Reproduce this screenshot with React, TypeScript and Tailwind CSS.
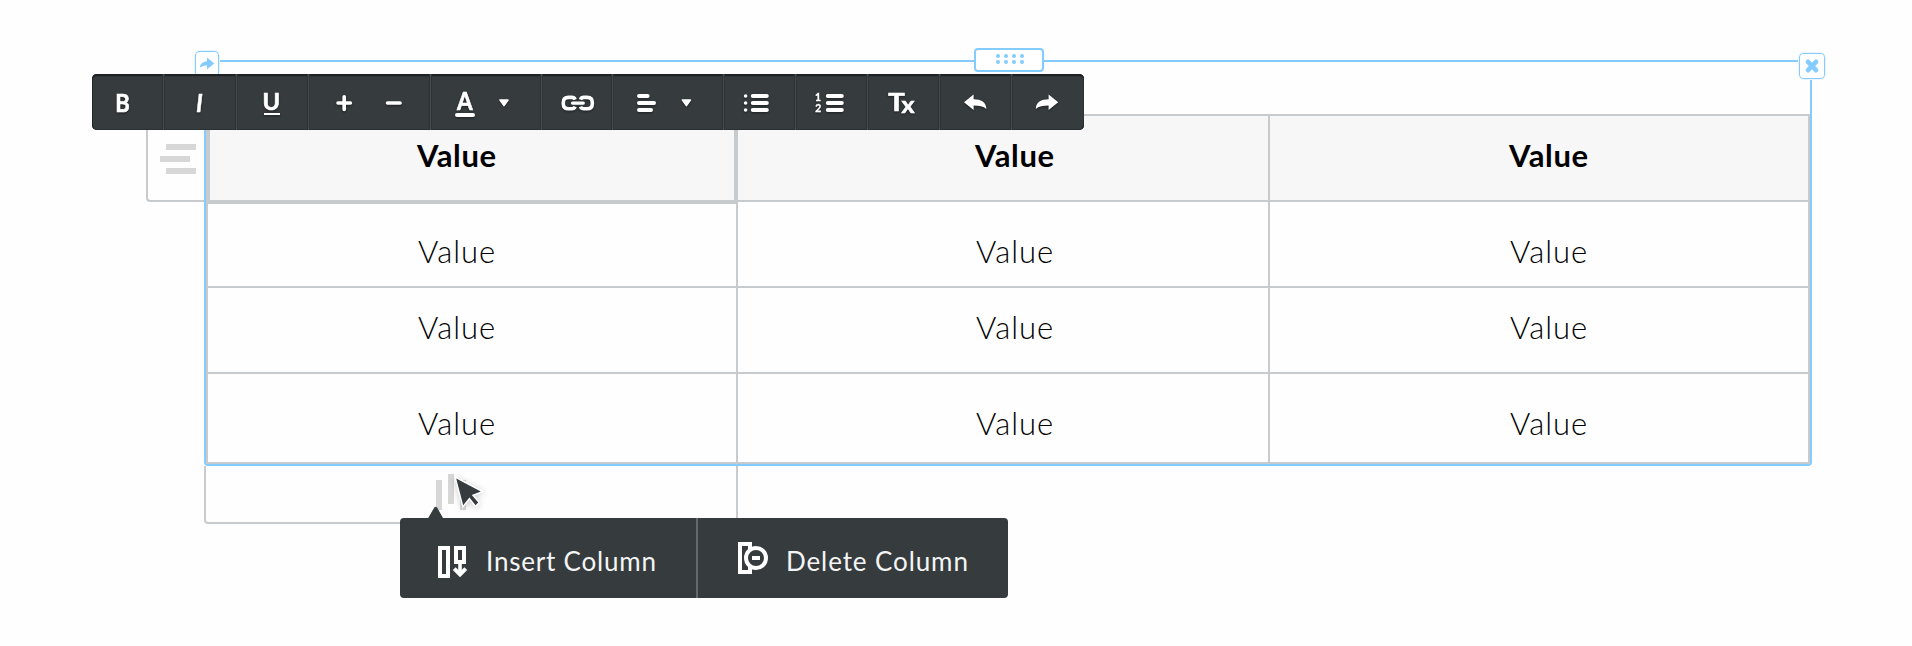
import type { ReactNode } from 'react';

const bodyRows = [
  { height: 'h-[86px]', text: 'pt-[31px]' },
  { height: 'h-[86px]', text: 'pt-[21px]' },
  { height: 'h-[88px]', text: 'pt-[31px]' },
];

const columns = ['w-[530px] pl-[210px] border-r-2', 'w-[532px] pl-[238px] border-r-2', 'w-[538px] pl-[240px]'];
const headColumns = ['w-[530px] pl-[209px] border-r-2', 'w-[532px] pl-[237px] border-r-2', 'w-[538px] pl-[239px]'];

const line = { stroke: '#fff', strokeWidth: 4, strokeLinecap: 'round' as const, fill: 'none' };

function Tool({ x, w, label, first, children }: { x: number; w: number; label: string; first?: boolean; children: ReactNode }) {
  return (
    <button
      aria-label={label}
      className={
        'h-full shrink-0 ' +
        (first
          ? 'shadow-[inset_-1px_0_0_#2c3134]'
          : 'shadow-[inset_1px_0_0_#454b4e,inset_2px_0_0_#2f3437,inset_-1px_0_0_#2c3134]')
      }
      style={{ width: w }}
    >
      <svg
        className="block overflow-visible drop-shadow-[0_1px_1px_rgba(0,0,0,0.45)]"
        width={w}
        height={56}
        viewBox={`${x} 74 ${w} 56`}
        fill="#fff"
        fontFamily="Lato, sans-serif"
        fontWeight={700}
      >
        {children}
      </svg>
    </button>
  );
}

const Caret = ({ x }: { x: number }) => (
  <path d={`M${x} 100h8l-4 5.6z`} stroke="#fff" strokeWidth="1.6" strokeLinejoin="round" />
);

const Rows = ({ x }: { x: number }) => <path {...line} d={`M${x} 96h14M${x} 103h14M${x} 110h14`} />;

function Toolbar() {
  return (
    <div className="absolute left-[92px] top-[74px] flex h-14 w-[992px] overflow-hidden rounded-[5px] bg-[#363b3e] shadow-[inset_0_2px_1px_#1d2122,inset_0_-1px_0_#2a2f32,inset_1px_0_0_#222627,inset_-1px_0_0_#1d2122]">
      <Tool x={92} w={71} label="Bold" first>
        <text x="115.3" y="111.6" fontSize="24" textLength="14.5" lengthAdjust="spacingAndGlyphs" stroke="#fff" strokeWidth=".6">B</text>
      </Tool>
      <Tool x={163} w={73} label="Italic">
        <text x="196" y="111.6" fontSize="24" fontStyle="italic" stroke="#fff" strokeWidth=".4">I</text>
      </Tool>
      <Tool x={236} w={72} label="Underline">
        <text x="262.6" y="109.6" fontSize="22" textLength="17.6" lengthAdjust="spacingAndGlyphs" stroke="#fff" strokeWidth=".6">U</text>
        <rect x="264" y="113" width="16" height="2" />
      </Tool>
      <Tool x={308} w={122} label="Font size">
        <path {...line} strokeWidth={3.6} d="M338 103h12.4M344.2 96.8v12.6M387.5 103h12.6" />
      </Tool>
      <Tool x={430} w={111} label="Text color">
        <text x="457" y="109.8" fontSize="24" textLength="15.6" lengthAdjust="spacingAndGlyphs" stroke="#fff" strokeWidth=".7">A</text>
        <path {...line} d="M457 115h16" />
        <Caret x={500} />
      </Tool>
      <Tool x={541} w={71} label="Link">
        <path
          {...line}
          strokeWidth={3.6}
          strokeLinecap="butt"
          d="M575.1 99.6q-.9-2.2-3.4-2.2h-3.2q-5.2 0-5.2 5v1.4q0 5 5.2 5h3.2q2.5 0 3.4-2.2M580.5 99.6q.9-2.2 3.4-2.2h3.2q5.2 0 5.2 5v1.4q0 5-5.2 5h-3.2q-2.5 0-3.4-2.2"
        />
        <path d="M570 103.1h15.6" stroke="#363b3e" strokeWidth="5.4" />
        <path {...line} strokeWidth={3.4} d="M572.6 103.1h10.6" />
      </Tool>
      <Tool x={612} w={111} label="Align">
        <path {...line} d="M639 96h8.6M639 103h15M639 110h12" />
        <Caret x={682.4} />
      </Tool>
      <Tool x={723} w={72} label="Bulleted list">
        <circle cx="745.6" cy="96" r="1.8" />
        <circle cx="745.6" cy="103" r="1.8" />
        <circle cx="745.6" cy="110" r="1.8" />
        <Rows x={752.8} />
      </Tool>
      <Tool x={795} w={72} label="Numbered list">
        <text x="815" y="100.8" fontSize="11.5" textLength="6" lengthAdjust="spacingAndGlyphs" stroke="#fff" strokeWidth=".4">1</text>
        <text x="815.3" y="111.8" fontSize="12" textLength="6" lengthAdjust="spacingAndGlyphs" stroke="#fff" strokeWidth=".4">2</text>
        <Rows x={827.8} />
      </Tool>
      <Tool x={867} w={72} label="Clear formatting">
        <text x="888.3" y="111.4" fontSize="24" textLength="16.5" lengthAdjust="spacingAndGlyphs" stroke="#fff" strokeWidth=".6">T</text>
        <text x="901.4" y="113" fontSize="23" textLength="13" lengthAdjust="spacingAndGlyphs" stroke="#fff" strokeWidth=".6">x</text>
      </Tool>
      <Tool x={939} w={72} label="Undo">
        <path d="M964 102.3L973.6 94.6V99.2C981 99.2 986.2 101.8 986.4 109C983.6 106.2 979 105.4 973.6 105.4V110Z" />
      </Tool>
      <Tool x={1011} w={73} label="Redo">
        <path d="M1058.2 102.3L1048.6 94.6V99.2C1041.2 99.2 1036 101.8 1035.8 109C1038.6 106.2 1043.2 105.4 1048.6 105.4V110Z" />
      </Tool>
    </div>
  );
}

function Table() {
  return (
    <div className="mt-[52px] h-[350px] border-2 border-[#c8cbce] font-['Lato'] text-[31px] leading-[36px] text-black">
      <div className="relative flex h-[86px] border-b-2 border-[#c8cbce] bg-[#f7f7f7]">
        {headColumns.map((c) => (
          <div key={c} className={`${c} border-[#c8cbce] pt-[21px] font-bold`}>
            <span className="tracking-[0.6px]">Value</span>
          </div>
        ))}
        <div className="absolute -left-[2px] -top-[2px] h-[90px] w-[532px] border-4 border-[#c8cbce]" />
      </div>
      {bodyRows.map((r, i) => (
        <div key={i} className={`${r.height} flex ${i < 2 ? 'border-b-2' : ''} border-[#c8cbce]`}>
          {columns.map((c) => (
            <div key={c} className={`${c} ${r.text} border-[#c8cbce] font-light`}>
              <span className="tracking-[1px]">Value</span>
            </div>
          ))}
        </div>
      ))}
    </div>
  );
}

function Menu() {
  return (
    <div className="absolute left-[400px] top-[518px] flex h-20 w-[608px] rounded bg-[#363b3e] font-['Lato'] text-[26px] leading-[32px] text-[#f4f5f5]">
      <svg className="absolute -top-[12px] left-[27px]" width="18" height="13" viewBox="427 506 18 13" fill="#363b3e">
        <path d="M427.6 519L434 508q1.7-2.6 3.4 0L443.6 519z" />
      </svg>
      <button className="flex h-full w-[298px] items-center border-r-2 border-[#65696c] pl-[37px]">
        <svg className="mt-[8px] shrink-0" width="32" height="34" viewBox="437 545 32 34" fill="none" stroke="#fff" strokeWidth="4">
          <path d="M440 548h8v28h-8z" />
          <path d="M456 548h8v14h-8z" />
          <path d="M460 562v12" strokeWidth="3.6" />
          <path d="M454.2 568.6l5.8 5.8 5.8-5.8" />
        </svg>
        <span className="ml-[17px] mt-[6px] whitespace-nowrap tracking-[0.8px]">Insert Column</span>
      </button>
      <button className="flex h-full flex-1 items-center pl-[39px]">
        <svg className="shrink-0" width="32" height="34" viewBox="737 541 32 34" fill="none" stroke="#fff" strokeWidth="4">
          <path d="M740 544h10v28h-10z" />
          <circle cx="756" cy="558" r="10" fill="#363b3e" />
          <path d="M752 558h8" />
        </svg>
        <span className="ml-[17px] mt-[6px] whitespace-nowrap tracking-[0.9px]">Delete Column</span>
      </button>
    </div>
  );
}

export default function App() {
  return (
    <div className="relative h-[646px] w-[1912px] overflow-hidden bg-[#fefefe] pt-[60px]">
      <div className="flex">
        <div className="mt-[52px] ml-[146px] h-[90px] w-[58px] shrink-0 rounded-bl border-b-2 border-l-2 border-[#c8cbce] pl-3 pt-[32px]">
          <div className="ml-[6px] h-[6px] w-[30px] bg-[#d7d7d7]" />
          <div className="mt-[6px] h-[6px] w-[30px] bg-[#d7d7d7]" />
          <div className="ml-[6px] mt-[6px] h-[6px] w-[30px] bg-[#d7d7d7]" />
        </div>
        <div className="relative h-[406px] w-[1608px] shrink-0 rounded border-2 border-[#84ccff]">
          <Table />
          <div className="absolute -left-[11px] -top-[11px] h-[26px] w-[24px] rounded-sm border border-[#84ccff] bg-white outline-1 outline-[#eaf4fb]">
            <svg className="block" width="22" height="22" viewBox="196 52 22 22" fill="#84ccff">
              <path d="M214.4 63.4L207 57.6V61.2C202.6 61.6 200.2 64 199.8 67.8C202 66 204.2 65.5 207 65.5V69.2Z" />
            </svg>
          </div>
          <div className="absolute -top-[14px] left-[768px] grid h-6 w-[70px] grid-cols-[repeat(4,4px)] grid-rows-[repeat(2,4px)] gap-x-1 gap-y-[2px] rounded border-2 border-[#84ccff] bg-white pl-5 pt-1">
            {Array.from({ length: 8 }, (_, i) => (
              <span key={i} className="size-1 rounded-full bg-[#84ccff]" />
            ))}
          </div>
          <div className="absolute -top-[9px] left-[1593px] h-[26px] w-[26px] rounded-sm border border-[#84ccff] bg-white outline-1 outline-[#eaf4fb]">
            <svg className="block" width="24" height="24" viewBox="0 0 24 24" stroke="#84ccff" strokeWidth="4.6" strokeLinecap="round">
              <path d="M8 7.8l8 8.4M16 7.8l-8 8.4" />
            </svg>
          </div>
        </div>
      </div>
      <div className="ml-[204px] h-[58px] w-[534px] rounded-bl border-x-2 border-b-2 border-[#c8cbce]">
        <div className="flex gap-[6px] pl-[230px]">
          <div className="mt-[14px] h-[30px] w-[6px] bg-[#d7d7d7]" />
          <div className="mt-[8px] h-[30px] w-[6px] bg-[#d7d7d7]" />
          <div className="mt-[14px] h-[30px] w-[6px] bg-[#d7d7d7]" />
        </div>
      </div>
      <Toolbar />
      <Menu />
      <svg className="absolute left-[450px] top-[472px] drop-shadow-[0_1px_3px_rgba(0,0,0,0.2)]" width="40" height="42" viewBox="450 472 40 42">
        <path
          d="M456.2 478.4L480.8 491.4L471.8 495L478.2 502.6L475.6 505.2L469.4 497.6L463.2 505.2Z"
          fill="#363b3e"
          stroke="#fff"
          strokeWidth="3"
          paintOrder="stroke"
        />
      </svg>
    </div>
  );
}
